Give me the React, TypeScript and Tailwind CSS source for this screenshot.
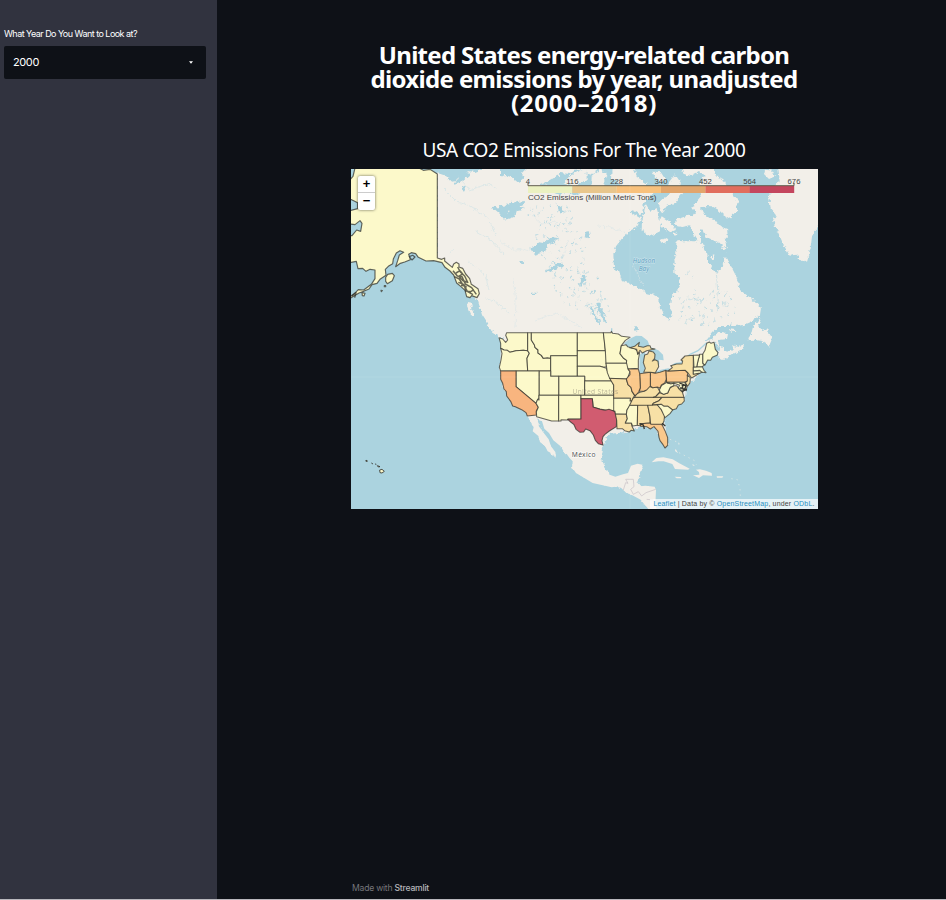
import React from "react";

type Shape = [string, string];

const Y = "#fcf9ca";
const T = "#f7e0a6";
const O = "#fac88b";

// West and east state outlines share one 3x grid; the eastern ones are shifted by 330.
const west: Shape[] = [
  [Y, "50,38 113,38 113,92 100,91 78,92 60,97 52,91 42,90 32,85 32,70 27,53 38,57 47,67 53,60 47,46"],
  [Y, "32,85 42,90 52,91 60,97 78,92 100,91 113,92 118,100 111,115 113,153 32,153 28,142 33,120 36,100"],
  [Y, "113,38 124,38 124,60 133,74 135,82 144,90 144,99 154,106 160,115 172,113 182,115 182,153 113,153 111,115 118,100 113,92"],
  [Y, "124,38 262,38 262,107 182,107 182,115 172,113 160,115 154,106 144,99 144,90 135,82 133,74 124,60"],
  [Y, "182,107 262,107 262,169 182,169"],
  [Y, "262,38 340,38 343,60 346,92 262,92"],
  [Y, "262,92 346,92 349,101 349,140 340,142 330,139 262,139"],
  [Y, "262,139 330,139 340,142 349,145 355,160 360,175 365,183 284,183 284,169 262,169"],
  [Y, "206,169 284,169 284,226 206,226"],
  [Y, "147,153 182,153 182,169 206,169 206,226 147,226"],
  [Y, "78,153 147,153 147,235 143,238 138,250 78,200"],
  ["#f8b57f", "32,153 78,153 78,200 138,250 145,262 139,273 139,285 112,288 108,278 95,269 76,260 68,258 62,244 50,228 49,215 42,207 38,190 32,178"],
  [Y, "147,226 206,226 206,303 185,303 140,290 139,275 145,262 138,250 143,238 147,240"],
  [Y, "206,226 273,226 273,297 235,297 232,300 213,299 213,303 206,303"],
  [Y, "284,183 365,183 371,195 371,226 284,226"],
  [Y, "273,226 371,226 374,243 374,272 350,271 330,267 310,262 307,236 273,236"],
  ["#d15c70", "233,298 273,297 273,236 307,236 309,261 330,268 345,271 357,268 373,274 377,278 380,297 379,320 358,333 345,343 339,350 336,362 339,375 325,371 316,361 310,345 300,332 287,327 281,336 270,337 258,328 252,314 242,306"],
];
const east: Shape[] = [
  [Y, "10,38 33,38 34,34 38,40 55,42 65,49 90,52 76,61 64,77 60,101 70,114 80,121 80,130 18,130 16,92"],
  [Y, "64,77 78,74 83,80 105,86 112,93 113,103 119,97 115,120 115,145 84,147 78,139 80,121 70,114 60,101"],
  [Y, "18,130 80,130 84,147 90,155 83,174 79,177 29,175 22,158"],
  [T, "29,175 79,177 84,194 93,202 96,214 104,226 99,235 96,243 90,243 91,235 41,235 41,195 35,185"],
  [Y, "41,235 91,235 90,243 96,244 89,258 81,270 79,283 46,282 45,274 41,272"],
  [T, "46,282 79,283 82,296 76,309 94,309 96,319 103,333 93,331 88,336 74,332 67,326 51,326 50,300"],
  [Y, "89,256 113,255 112,316 98,318 94,309 76,309 82,296 79,283 81,270"],
  [T, "113,255 143,255 150,290 150,309 120,311 123,318 112,316"],
  [T, "143,255 172,254 183,267 194,286 192,302 188,314 152,313 150,290"],
  [O, "120,311 150,309 153,313 184,313 187,316 195,332 203,353 203,376 195,384 189,374 180,362 177,352 174,334 162,320 151,327 140,320 123,319"],
  [T, "99,235 105,232 186,232 177,242 160,250 157,255 89,256"],
  [T, "186,232 252,232 253,243 245,252 235,255 229,266 217,270 204,259 192,259 184,253 157,254 160,250 177,242"],
  [Y, "172,255 184,253 192,259 204,259 218,270 210,281 195,293 184,269"],
  [T, "104,232 109,222 120,217 135,213 147,199 158,203 172,201 180,215 167,230 160,232"],
  [T, "160,232 167,230 179,218 191,223 203,219 210,203 221,197 230,197 238,208 247,216 252,232"],
  [Y, "178,210 184,197 197,189 200,181 202,190 212,191 222,190 221,197 211,202 203,219 191,223 181,217"],
  [O, "151,157 166,160 180,157 198,151 199,178 194,189 184,195 180,204 172,201 158,203 151,198"],
  [O, "119,161 151,157 151,198 140,210 132,213 118,214 121,203"],
  [O, "84,147 115,147 119,161 121,203 116,216 109,224 104,226 96,214 93,202 84,194 79,177 90,164 90,155"],
  [O, "198,152 204,153 256,151 264,159 262,167 268,173 262,183 254,187 200,187"],
  [T, "204,153 217,143 212,137 230,132 246,132 248,123 243,120 255,108 280,106 280,140 280,162 300,159 275,174 264,159 256,151"],
  [T, "131,157 136,145 130,128 134,105 143,102 147,93 160,96 165,103 164,115 157,123 165,119 174,124 176,140 166,158 151,157"],
  [T, "89,83 104,79 118,67 115,79 130,82 142,77 150,77 153,85 165,87 140,92 127,99 120,91 113,102 110,88"],
  [Y, "308,103 315,91 320,70 328,66 333,70 342,67 346,88 354,98 351,106 337,112 332,121 323,120 315,135 308,130"],
  [Y, "299,103 308,103 308,130 313,135 307,140 290,141 294,122"],
  [Y, "280,106 299,105 294,122 290,141 282,142"],
  [Y, "280,142 307,140 312,151 318,158 303,156 299,151 280,153"],
  [Y, "280,153 299,152 307,157 300,159 280,163"],
  [T, "262,165 271,173 270,188 263,199 256,188 262,183"],
  [Y, "202,187 254,187 261,201 259,209 251,205 249,216 241,209 235,203 239,196 229,192 222,190 212,191"],
];

const naturalLakes: string[] = [
  "0,120 15,118 18,107 45,103 75,99 72,110 62,115 68,126 48,130 42,147 20,155 16,142 30,132 10,125",
  "88,242 103,234 110,234 117,223 130,225 142,214 160,208 176,210 160,223 145,231 140,244 124,255 104,260 103,252 90,250",
  "135,306 151,303 165,289 183,284 194,293 170,300 154,309 139,313",
  "247,322 257,325 255,338 244,357 238,342",
  "289,404 302,404 302,421 311,431 319,460 316,468 309,455 303,441 292,428",
  "275,411 281,424 283,440 299,455 300,475 287,456 278,442 270,418",
  "257,192 267,190 270,207 260,214 254,205",
  "167,105 177,113 184,118 189,132 179,137",
];

const Poly = ({ data, dx = 0 }: { data: Shape[]; dx?: number }) => (
  <g transform={`translate(${dx} 0)`} stroke="#2f2f2a" strokeOpacity=".72" strokeWidth="3.2" strokeLinejoin="round">
    {data.map(([fill, points], i) => (
      <polygon key={i} points={points} fill={fill} />
    ))}
  </g>
);

// Small lakes scattered over the Canadian shield.
const specks = Array.from({ length: 210 }, (_, i) => {
  const a = (i * 0.618034 + Math.abs(Math.sin(i * 5.3)) * 0.2) % 1;
  const b = (i * 0.754878 + Math.abs(Math.sin(i * 2.9)) * 0.2) % 1;
  const c = (i * 0.41421) % 1;
  const inQuebec = i % 4 === 0;
  return {
    x: inQuebec ? 678 + a * 58 : 520 + b * 45 + a * 48,
    y: inQuebec ? 291 + b * 34 : 205 + b * 108,
    w: 0.4 + c * c * 1.6,
    h: 0.3 + (1 - c) * 0.9,
    r: -20 - c * 60,
  };
});

const legend: [string, number][] = [
  ["#ebf1c1", 528], ["#e8c68c", 572.3], ["#f8c17c", 616.7], ["#e2a56c", 661], ["#e16d5d", 705.4], ["#c4465e", 749.7],
];
const ticks: [string, number][] = [["4", 528], ["116", 572.3], ["228", 616.7], ["340", 661], ["452", 705.4], ["564", 749.7], ["676", 794]];

function EmissionsMap() {
  return (
    <svg className="block h-[340px] w-[467px]" viewBox="351 169 467 340">
      <defs>
        <filter id="coast" x="0" y="0" width="1" height="1">
          <feTurbulence type="fractalNoise" baseFrequency=".28" numOctaves="2" seed="7" />
          <feDisplacementMap in="SourceGraphic" scale="5" xChannelSelector="R" yChannelSelector="G" />
        </filter>
      </defs>
      <g filter="url(#coast)">
        <rect x="341" y="159" width="487" height="360" fill="#abd3df" />
        <g fill="#f2efe9">
          <path d="M437 165V171L443 175L450 180L455 182L458 177L464 176L468 171L475 172L483 169V160H700V240L707 253L708 263L715 273L722 268L726 256L732 268L737 278L740 290L748 296L755 301L761 308L760 315L752 321L743 325L735 326L720 326L712 333L706 341L711 339L716 334L724 332L728 334L727 339L718 340L719 345L724 350L731 351L734 348L732 345L738 347L743 344L744 348L735 353L724 360L718 357L719 347L715 342L712 354L706 362L700 372L694 379L686 388L685 400L670 410L664 418L668 445L660 440L656 428L640 427L625 432L610 434L603 444L601 455L604 465L610 476L617 484L623 486L630 482L633 467L638 464L643 465L640 475L637 481L642 487L652 487L655 492L652 506L645 505L638 496L627 493L621 488L611 485L599 484L583 476L572 468L573 459L564 452L557 440L551 432L547 424L541 420L536 418L540 428L546 439L552 449L556 458L550 452L545 445L540 438L537 430L532 425L528 415L520 408L509 397L502 385L500 372L501 345L504 337L497 333L489 326L482 315L478 301L471 291L461 281L450 267L437 260Z" />
          <path d="M473 303L468 302L467 306L471 315L475 315L471 308ZM486 321L492 324L501 334L506 338L500 337L490 330ZM505 332L510 336L505 337Z" />
        </g>

        {/* Arctic waters, Hudson Bay and the islands within them */}
        <g transform="translate(500 168) scale(.333333)">
          <path fill="#abd3df" d="M0 -20H80V0L66 15L72 32L55 44L35 28L13 20L0 27ZM120 48L145 40L165 28L180 15L210 18L223 5L250 4L272 22L300 0V-20H655V0L640 60L612 98L585 135L565 165L595 220H532V245L523 270L525 300L537 325L540 350L528 372L513 390L510 418L517 440L507 455L490 440L480 420L478 390L460 380L440 376L415 360L385 345L365 338L358 310L342 300L340 260L348 235L367 210L395 185L410 178L425 153L390 132L398 127L425 141L432 105L460 75L390 64L355 54L329 72L310 45L270 55L230 80L190 72L180 82L140 66Z" />
          <path fill="#f2efe9" d="M85 0V-20H160V0L178 21L145 35L105 45L94 27ZM210 22L254 0V-20H260V36L228 55L192 45ZM275 23L300 4L320 18L307 55L274 63ZM335 0V-20H400V0L412 28L444 48L430 66L383 63L352 40L333 33ZM438 109L452 132L470 120L480 158L480 190L451 205L425 186L426 161ZM475 105L490 90L530 70L550 75L525 105L500 115L485 135ZM472 35L455 11L482 12L495 32L482 48ZM505 45L525 19L543 45L535 86L510 83ZM545 0V-20H640V0L650 22L625 30L598 10L572 24L550 17ZM485 145L503 157L516 166L526 185L510 192L490 178L476 164ZM480 215L502 210L501 221L485 228ZM535 225L548 224L551 242L541 241Z" />
        </g>
        <g transform="translate(655 168) scale(.333333)">
          <g fill="#f2efe9">
            <path d="M65 222L78 220L90 225L110 220L130 235L138 249L155 253L160 285L180 315L200 300L212 265L230 300L210 350H110L60 380L78 365L78 340L70 325L58 315V290L68 267L63 242Z" />
            <path d="M75 151L97 143L120 145L125 137L112 119L123 102L140 82L130 59L145 26L170 20L205 33L215 60L230 75L252 103L243 115L249 132L231 138L230 155L210 143L190 125L171 115L153 114L137 120L144 135L166 152L181 156L195 175L216 183L219 209L209 209L214 234L204 236L190 224L173 216L155 207L145 185L132 184L121 173L105 171L83 177L60 174L62 154Z" />
            <path d="M55 195L63 190L67 200L59 203ZM200 235L216 240L212 247L198 241ZM169 265L178 262L177 272L170 274ZM330 5L355 8L351 18L361 25L342 33L327 18Z" />
            <path d="M370 -20H512V160L492 172L481 187L471 205L467 240L459 265L457 280L448 283L421 260L404 263L391 240L381 220L373 201L362 180L355 160L363 142L347 122L344 97L338 80L355 78L351 62L365 48L374 36L370 3Z" />
            <path d="M312 451L319 451L309 474L322 486L338 481L337 492L351 513L342 535L322 520L301 515L277 517L288 500L293 480ZM218 483L241 486L248 492L230 491Z" />
          </g>
          <path fill="none" stroke="#abd3df" strokeWidth="2" opacity=".75" d="M184 316L190 390L186 430M75 410L103 392L144 395M120 450L93 455M145 440V470M205 410L214 396L221 406L218 416ZM90 320L104 310M72 433L90 427M113 330L120 324" />
        </g>
        <g transform="translate(500 168) scale(.333333)" fill="#abd3df">
          {naturalLakes.map((p, i) => <polygon key={i} points={p} />)}
          <path d="M93 374L109 374V378H93ZM403 475L413 475L414 486L404 488ZM60 283L74 278L68 288Z" />
        </g>
        <g fill="#abd3df">
          {specks.map((s, i) => (
            <ellipse key={i} cx={s.x} cy={s.y} rx={s.w} ry={s.h} transform={`rotate(${s.r} ${s.x} ${s.y})`} opacity=".8" />
          ))}
        </g>
        <path fill="none" stroke="#cfe2e6" strokeWidth=".6" d="M443 188L457 202L468 205L488 218L496 236M450 254L455 248M468 260L485 275L489 290M462 181L470 190L487 184L497 188M485 298L495 302L509 313M475 231L491 240L505 255" />
        <path fill="none" stroke="#dae6e7" strokeWidth=".6" d="M500 241L508 247L516 250L523 249L533 252M541 183L550 187L548 194M532 215L542 224L555 221L558 231M597 226L610 227L627 233M568 240L565 251L560 259M513 278L516 301L515 328M535 320L557 313L582 328M633 265L643 285" />
        <path fill="#abd3df" d="M461 171L470 174L462 181L455 184ZM492 207L510 205L508 213L504 219L499 213ZM461 188L466 185L464 192Z" />
      </g>

      {/* Great Lakes */}
      <g transform="translate(600 320) scale(.333333)" fill="#abd3df">
        <path d="M72 70L88 57L108 47L125 48L143 62L150 80L130 85L113 80L88 88ZM118 159L119 105L130 94L136 100L130 128L135 146L130 160ZM147 92L150 81L175 91L189 104L191 121L177 119L178 132L168 150L164 157L161 116ZM165 157L180 150L205 145L213 148L195 158L171 162ZM212 138L224 129L245 126L244 134L225 139Z" />
        <path fill="none" stroke="#abd3df" strokeWidth="4" d="M244 126L270 103L294 92L320 68M0 65L20 59M35 25V38" />
      </g>

      {/* Mexico, Central America and the Caribbean */}
      <g transform="translate(490 400) scale(.333333)">
        <path fill="#f2efe9" d="M112 47L141 50L147 80L162 100L176 118L183 139L196 156L198 172L187 161L173 154L165 138L150 126L145 108L128 94L131 82ZM153 54L185 63L233 58L272 97L309 115L338 134L331 166L334 198L355 223L376 230L399 223L414 219L423 197L443 191L457 194L448 223L443 244L429 261L466 257L494 260L498 270L496 315L500 327H475L452 299L427 286L407 277L388 259L365 262L308 249L258 219L247 203L248 184L238 173L218 144L190 121L177 99L163 86Z" />
        <path fill="none" stroke="#c7bfc6" strokeWidth="2" d="M400 270L407 248L414 250L407 238H430L432 260L422 268L430 283L445 275L455 288L468 278L497 268M470 298L490 300" />
        <path fill="#f2efe9" d="M485 187L499 174L520 172L548 178L568 190L599 206L594 209L555 207L547 192L521 184L505 184ZM618 209L630 208L648 212L665 219L666 227L639 226L627 234L609 226L628 224L627 216ZM554 230L573 231L574 235L560 235ZM680 229H700L697 233H681ZM557 146L564 160L555 153ZM565 127L569 132L566 134ZM607 193L615 196L609 197Z" />
        <path fill="none" stroke="#e8ebe5" strokeWidth="2" strokeDasharray="4 12" d="M540 118L567 128M567 158L614 182L619 194M724 236L742 239L750 264L751 288" />
      </g>

      <g transform="translate(350 168) scale(.333333)" stroke="#2f2f2a" strokeOpacity=".72" strokeWidth="3.5" strokeLinejoin="round">
        <path fill={Y} d="M-5 0L0 -8H204L207 0L220 7L240 4L262 18V270L275 274L284 270V279L307 298L311 288L319 283L327 288V297L338 301L347 318L359 332L364 349L384 362L388 377L381 389L365 383L360 389L350 386L345 367L333 356L320 345L311 321L300 309L285 298L276 284L251 278L228 279L205 268L197 257L184 254L176 259L181 275L164 282L151 286L137 296L143 278L148 261L161 253L150 248L139 255L130 273L128 287L115 295L106 304L108 322L90 334L81 346L66 350L57 363L41 370L27 375L2 390H-5L0 385L8 382L25 365L41 366L53 357L64 349L75 332V306L60 304L48 310L38 301L24 302L19 280L0 284L-8 284Z" />
        <path fill="#abd3df" d="M-5 95L5 95L23 104V122L0 128ZM-5 167L15 170L30 158L36 166L32 190L20 186L6 203L-5 202ZM178 266L188 262L195 267L186 276ZM0 35L9 25L15 0H-5V35Z" />
        <path fill={Y} d="M107 328L113 319L127 316L133 323L127 338L112 347L107 340ZM36 374L45 376L42 384L37 383ZM103 353L107 353V356H103ZM93 367L97 368L94 371Z" />
        <path fill="none" strokeWidth="4.5" d="M309 308L322 324L336 326L346 348L365 359L379 379M313 326L328 333L337 348L350 358M323 297L331 312L344 324L354 345M318 315L330 308L338 318L326 325L339 338L351 342M333 352L344 354L347 369L362 371L372 365M325 343L341 349L352 370L369 380M5 383L18 374L14 389" />
      </g>

      <g transform="translate(490 320) scale(.333333)">
        <Poly data={west} />
        <Poly data={east} dx={330} />
        <path d="M568 189L581 194L575 206L591 210M575 197L588 195L584 211L576 214M570 204L580 205" fill="none" stroke="#35352f" strokeWidth="4" />
        <path d="M449 311L460 315L463 327M516 310L526 318" fill="none" stroke="#35352f" strokeWidth="4" />
      </g>

      <g transform="translate(345 440) scale(.333333)" fill={Y} stroke="#35352f" strokeWidth="3" strokeOpacity=".85">
        <path d="M62 62L66 61L67 64L63 64ZM79 69L84 72M90 72L94 73M97 77L105 80L100 81ZM104 90L111 88L118 94L111 99L105 98Z" />
      </g>

      <g fontFamily="Noto Sans, sans-serif" textAnchor="middle">
        <text x="595.5" y="394" fontSize="6.6" fill="#8b8574" opacity=".55" letterSpacing=".35">United States</text>
        <text x="583.8" y="456.5" fontSize="6.7" fill="#555" stroke="#fff" strokeWidth="1.2" paintOrder="stroke" letterSpacing=".3">México</text>
        <g fontSize="6.3" fontStyle="italic" fill="#5d9fc0" stroke="#d1e7ef" strokeWidth=".8" paintOrder="stroke" letterSpacing=".15">
          <text x="644" y="263.3">Hudson</text>
          <text x="644" y="271.3">Bay</text>
        </g>
      </g>

      {legend.map(([fill, x]) => <rect key={x} x={x} y="185.8" width="44.5" height="7.2" fill={fill} />)}
      <path d="M528 183V185.7H794V183" fill="none" stroke="#625d4e" strokeWidth="1" />
      <g fontFamily="Liberation Sans, Arial, sans-serif" fontSize="7.7" fill="#444">
        {ticks.map(([label, x]) => <text key={label} x={x} y="184" textAnchor="middle">{label}</text>)}
        <text x="528" y="200" textLength="128.5" lengthAdjust="spacingAndGlyphs">CO2 Emissions (Million Metric Tons)</text>
      </g>
      <path d="M351 377H818M630 169V509" stroke="#fff" strokeWidth=".5" opacity=".12" />
    </svg>
  );
}

export default function App() {
  return (
    <div className="flex h-[900px] w-[946px] flex-col overflow-hidden bg-[#0e1117] text-white">
      <div className="flex min-h-0 flex-1">
        <aside className="w-[217px] shrink-0 bg-[#31333f] px-1 pt-[28px] font-['Inter',sans-serif]">
          <label className="block h-[18px] whitespace-nowrap text-[9px] leading-[12px] tracking-[-0.53px]">What Year Do You Want to Look at?</label>
          <div className="flex h-[33px] w-[202px] items-center justify-between rounded-[2px] bg-[#0e1117] pr-[13px] pl-[9px] text-[11px]">
            <span className="tracking-[-0.4px]">2000</span>
            <svg className="h-[3px] w-[4px]" viewBox="0 0 5 3"><path d="M0 0H5L2.5 3Z" fill="#fff" /></svg>
          </div>
        </aside>
        <main className="flex flex-1 flex-col pl-[134px] font-['Noto_Sans',sans-serif]">
          <h1 className="mt-[43px] h-[95px] w-[466px] text-center text-[24px] leading-[24px] font-bold whitespace-nowrap">
            <span className="block tracking-[-0.7px]">United States energy-related carbon</span>
            <span className="block tracking-[-0.65px]">dioxide emissions by year, unadjusted</span>
            <span className="block tracking-[0.72px]">(2000–2018)</span>
          </h1>
          <h2 className="h-[31px] w-[466px] text-center text-[19px] leading-[24px] tracking-[-0.4px] whitespace-nowrap">USA CO2 Emissions For The Year 2000</h2>
          <div className="grid h-[340px] w-[467px]">
            <div className="col-start-1 row-start-1"><EmissionsMap /></div>
            <div className="z-10 col-start-1 row-start-1 mt-[7px] ml-[7px] h-[34px] w-[17px] overflow-hidden rounded-[2px] bg-white font-['Liberation_Sans',sans-serif] text-[13px] font-bold text-black shadow-[0_0_3px_rgba(0,0,0,0.6)]">
              <div className="flex h-[17px] items-center justify-center border-b border-[#ccc] leading-[14px]">+</div>
              <div className="flex h-[17px] items-center justify-center pb-[2px] leading-[14px]">−</div>
            </div>
            <div className="z-10 col-start-1 row-start-1 flex h-[10px] w-[168px] items-center justify-center self-end justify-self-end bg-[#ffffffb3] font-['Liberation_Sans',sans-serif] text-[7px] tracking-[0.17px] whitespace-pre text-[#444]">
              <span className="text-[#288fbf]">Leaflet</span> | Data by © <span className="text-[#288fbf]">OpenStreetMap</span>, under <span className="text-[#288fbf]">ODbL</span>.
            </div>
          </div>
          <footer className="mt-auto mb-[5px] pl-px font-['Inter',sans-serif] text-[8.6px] leading-[12px] tracking-[-0.22px] text-[#76767b]">
            Made with <span className="font-medium text-[#b7b8bb]">Streamlit</span>
          </footer>
        </main>
      </div>
      <div className="h-px bg-[#b9b8bd]" />
    </div>
  );
}
